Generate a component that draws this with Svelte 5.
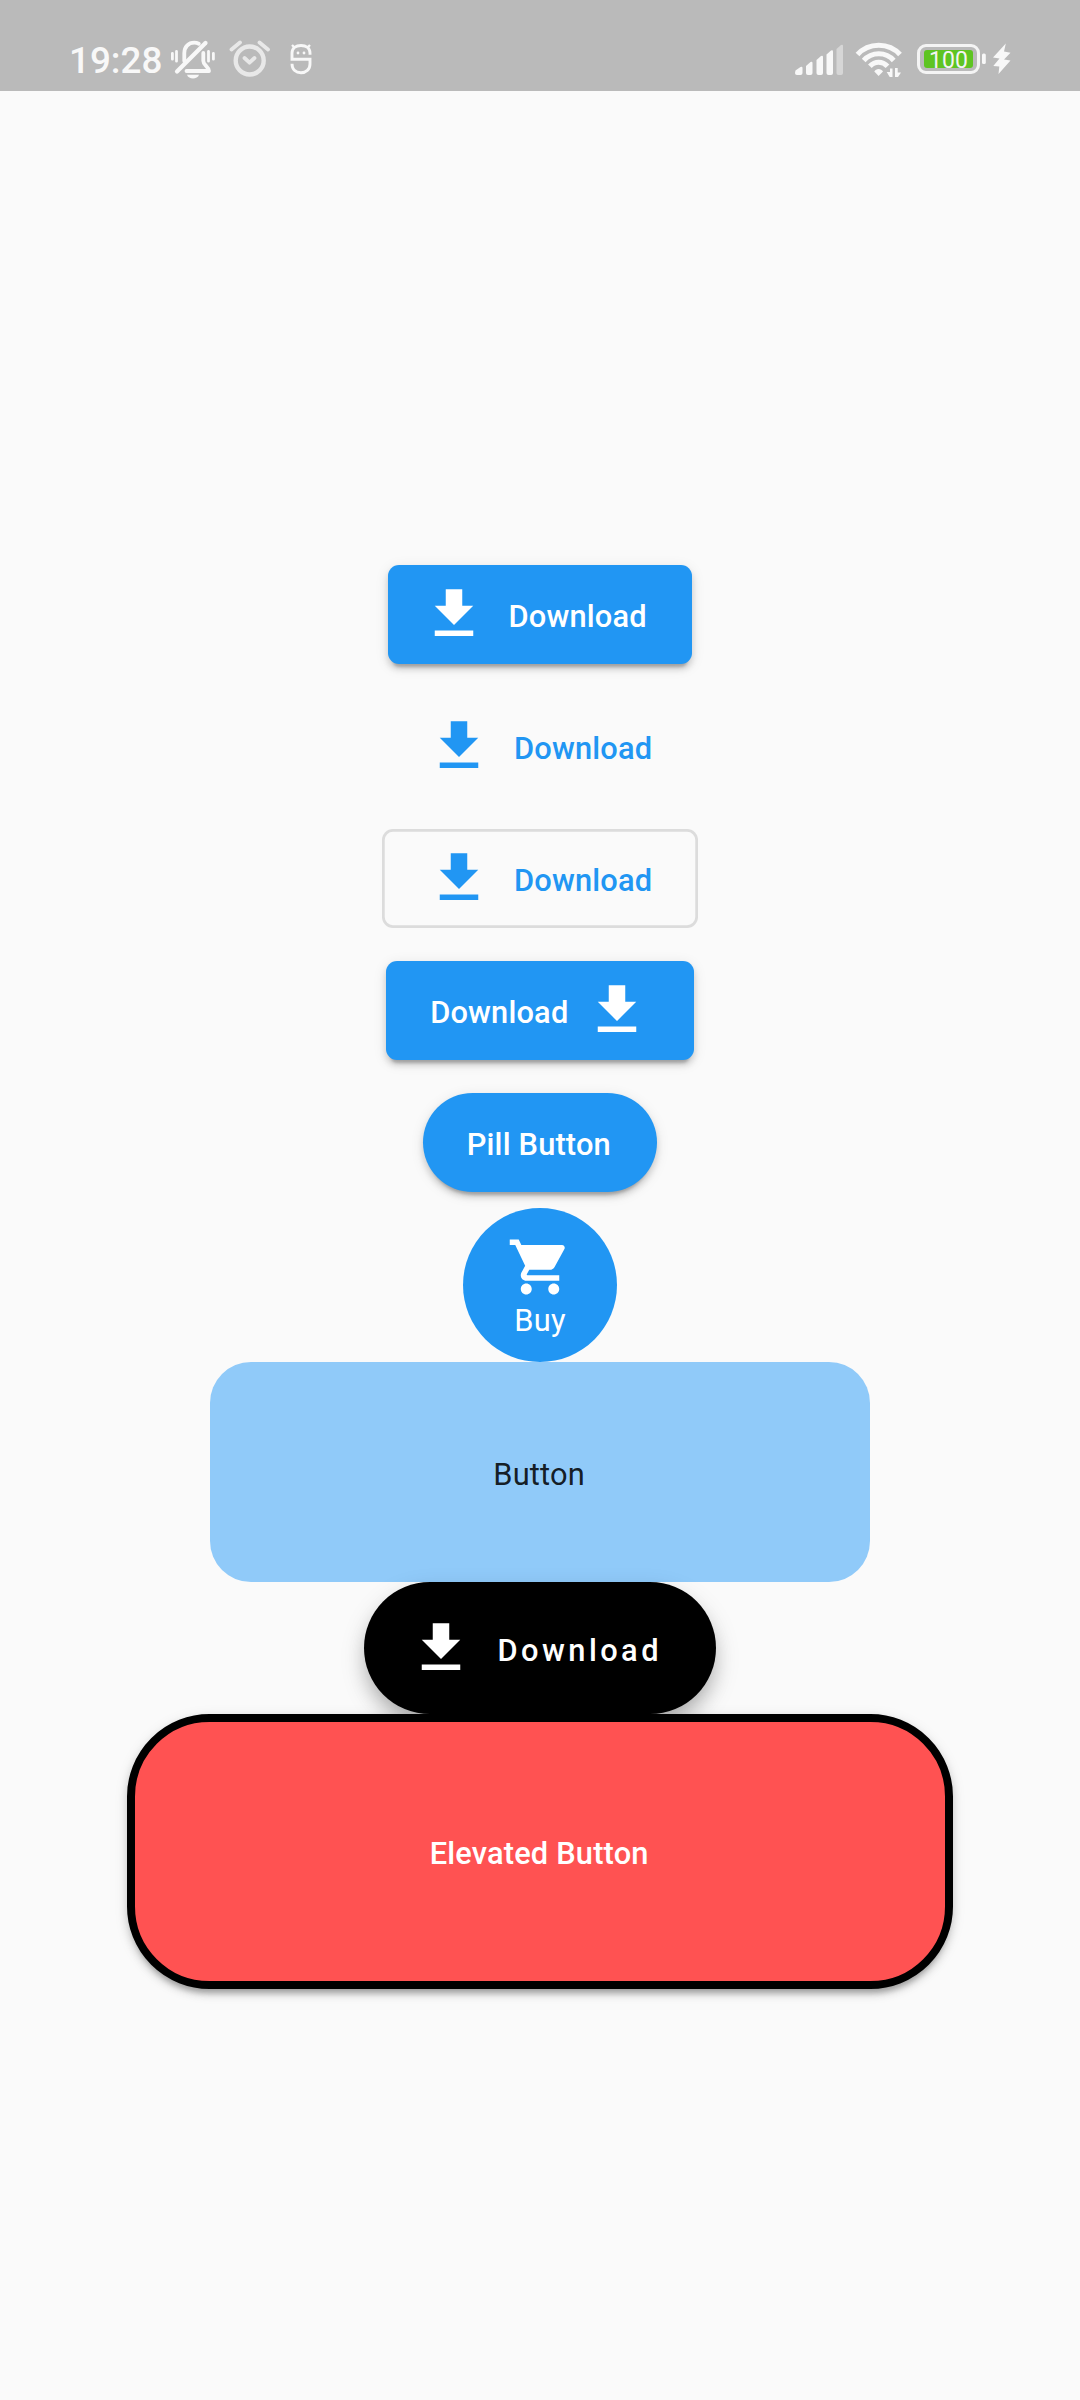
<script>
  const download = 'M19 9h-4V3H9v6H5l7 7 7-7zM5 18v2h14v-2H5z';
  const cart =
    'M7 18c-1.1 0-1.99.9-1.99 2S5.9 22 7 22s2-.9 2-2-.9-2-2-2zM1 2v2h2l3.6 7.59-1.35 2.45c-.16.28-.25.61-.25.96 0 1.1.9 2 2 2h12v-2H7.42c-.14 0-.25-.11-.25-.25l.03-.12.9-1.63h7.45c.75 0 1.41-.41 1.75-1.03l3.58-6.49c.08-.14.12-.31.12-.48 0-.55-.45-1-1-1H5.21l-.94-2H1zm16 16c-1.1 0-1.99.9-1.99 2s.89 2 1.99 2 2-.9 2-2-.9-2-2-2z';
</script>

{#snippet icon(path)}
  <svg class="icon" viewBox="0 0 24 24"><path d={path} fill="currentColor" /></svg>
{/snippet}

<div class="screen">
  <header class="status">
    <span class="time">19:28</span>
    <svg class="bell" width="46" height="91" viewBox="170 0 46 91" fill="none" stroke="#f8f8f8" stroke-linecap="round">
      <path d="M172.400 53.500v5.700M176.500 51.500v9.700M208.500 51.500v9.700M213.400 53.500v5.700" stroke-width="2.800" />
      <path d="M177 71.500L205.500 43" stroke-width="4.200" />
      <path d="M184.300 61V53c0-6 4-10.300 10-10.300 2 0 3 .3 4.500 1M203.300 53v8c0 4 5 5 5.700 10H186.500" stroke-width="3.800" stroke-linejoin="round" />
      <path d="M187 74.700h12c-1.500 5-10.500 5-12 0z" fill="#f8f8f8" stroke="none" />
    </svg>
    <svg class="alarm" width="42" height="91" viewBox="229 0 42 91" fill="none" stroke="#e8e8e8" stroke-linecap="round">
      <circle cx="249.700" cy="60.500" r="14" stroke-width="4.400" />
      <path d="M244.500 58l5 4.700 5-4.700M231.500 49.500l8.500-7M268 49.500l-8.500-7" stroke-width="3.800" stroke-linejoin="round" />
    </svg>
    <svg class="app" width="24" height="91" viewBox="290 0 24 91" fill="none" stroke="#f8f8f8" stroke-width="2.900">
      <path d="M310 54.800V53c0-5-4-7.500-9-7.500s-9 2.500-9 7.500v6.300h18V64c0 5.500-4 8.700-9 8.700s-9-3-9-9" />
      <path d="M292 45l3 3M310 45l-3 3" stroke-width="2.400" />
      <circle cx="298" cy="53" r="1.400" fill="#f8f8f8" stroke="none" />
      <circle cx="304" cy="53" r="1.400" fill="#f8f8f8" stroke="none" />
    </svg>
    <svg class="signal" width="50" height="91" viewBox="794 0 50 91" fill="#f8f8f8">
      <path d="M795.500 70.500l5-3.500q2-1 2 1v5q0 2-2 2h-3.500q-2 0-2-2z" />
      <path d="M806 66l4.500-4q2-1 2 1v10q0 2-2 2H808q-2 0-2-2z" />
      <path d="M816.500 60l4.500-4q2-1 2 1v16q0 2-2 2h-2.500q-2 0-2-2z" />
      <path d="M826.500 54.500l4.500-4q2-1 2 1V73q0 2-2 2h-2.500q-2 0-2-2z" />
      <path d="M836.500 49l4.500-4q2-1 2 1V73q0 2-2 2h-2.500q-2 0-2-2z" fill="#d6d6d6" />
    </svg>
    <svg class="wifi" width="48" height="91" viewBox="855 0 48 91" fill="none" stroke="#f8f8f8" stroke-width="5">
      <path d="M857.500 54.500c11-12.500 31.500-12.500 42.500 0M863.700 60.500c8-9 22.300-9 30 0M869.900 66.300c5-5.500 12.500-5.500 17.600 0" />
      <path d="M874.300 71.500c1.500-3.500 7-3.500 8.700 0l-4.400 4.500z" fill="#f8f8f8" stroke="none" />
      <path d="M890 68.500h2.500V77h-2.800l-3-5h3.300zM895 68h2.700v4.500h3.300L898 77h-3z" fill="#f8f8f8" stroke="none" />
    </svg>
    <div class="battery"><span class="level">100</span></div>
    <svg class="bolt" width="24" height="91" viewBox="985 0 24 91" fill="#f8f8f8">
      <rect x="982" y="53.500" width="3.800" height="10.500" rx="1.500" />
      <path d="M1005.800 43.500L993 57.500l6.500 1-6.200 7.500 6 .5-.8 7.500 12-13.500-6.500-1 6.500-6.800-6.500-1.200z" />
    </svg>
  </header>

  <main>
    <div class="slot"><button class="btn raised lead">{@render icon(download)}<span class="label">Download</span></button></div>
    <div class="slot"><button class="btn flat">{@render icon(download)}<span class="label">Download</span></button></div>
    <div class="slot"><button class="btn flat outlined">{@render icon(download)}<span class="label">Download</span></button></div>
    <div class="slot"><button class="btn raised trail"><span class="label">Download</span>{@render icon(download)}</button></div>
    <div class="slot"><button class="btn raised pill"><span class="label">Pill Button</span></button></div>
    <button class="buy">{@render icon(cart)}<span class="label">Buy</span></button>
    <button class="panel"><span class="label">Button</span></button>
    <button class="dark">{@render icon(download)}<span class="label">Download</span></button>
    <button class="elevated"><span class="label">Elevated Button</span></button>
  </main>
</div>

<style>
  :global(body) { margin: 0; background: #fafafa; }
  .screen {
    width: 1080px;
    height: 2400px;
    overflow: hidden;
    background: #fafafa;
    font-family: Roboto, sans-serif;
    display: flex;
    flex-direction: column;
  }
  .status {
    height: 91px;
    flex: none;
    background: #bababa;
    color: #f8f8f8;
    display: flex;
    align-items: center;
  }
  .status svg { flex: none; }
  .time {
    box-sizing: border-box;
    width: 101px;
    height: 91px;
    margin-left: 69px;
    padding-top: 42px;
    font-size: 36.8px;
    font-weight: 500;
    line-height: 37px;
    white-space: nowrap;
  }
  .alarm { margin-left: 13px; }
  .app { margin-left: 19px; }
  .signal { margin-left: auto; }
  .wifi { margin-left: 11px; }
  .battery {
    box-sizing: border-box;
    width: 63px;
    height: 30px;
    margin: 27px 0 0 14px;
    padding: 3px 4px;
    border: 3px solid #f4f4f4;
    border-radius: 9px;
    display: flex;
  }
  .level {
    width: 49px;
    height: 18px;
    border-radius: 3px;
    background: #5ec422;
    color: #f4f4f4;
    font-size: 23px;
    line-height: 21px;
    text-align: center;
  }
  .bolt { margin: 0 71px 0 5px; overflow: visible; }

  main {
    margin-top: 457.25px;
    display: flex;
    flex-direction: column;
    align-items: center;
  }
  button {
    box-sizing: border-box;
    flex: none;
    margin: 0;
    padding: 0;
    border: 0;
    background: none;
    font-family: inherit;
    display: flex;
    align-items: center;
    justify-content: center;
  }
  .slot { height: 132px; display: flex; align-items: center; }
  .icon { width: 66px; height: 66px; flex: none; display: block; }
  .label {
    font-size: 30.8px;
    font-weight: 500;
    line-height: 36px;
    letter-spacing: 0.18px;
    white-space: nowrap;
    padding: 5px 1.7px 0 0;
  }
  .btn { height: 99px; gap: 22px; padding: 0 44px; border-radius: 11px; color: #fff; }
  .raised {
    background: #2196f3;
    box-shadow: 0 8px 3px -5px rgba(0, 0, 0, 0.2), 0 5px 6px rgba(0, 0, 0, 0.14), 0 3px 14px rgba(0, 0, 0, 0.1);
  }
  .lead { padding-left: 33px; }
  .flat { color: #2196f3; }
  .outlined { box-shadow: inset 0 0 0 2.75px #dcdcdc; }
  .trail { gap: 13.75px; }
  .pill { border-radius: 49.5px; }
  .pill .label { padding-right: 2.3px; }
  .buy {
    width: 154px;
    height: 154px;
    border-radius: 50%;
    background: #2196f3;
    color: #fff;
    flex-direction: column;
  }
  .buy .label { font-weight: 400; padding: 3px 0 0; margin-bottom: -3px; }
  .panel {
    width: 660px;
    height: 220px;
    border-radius: 41px;
    background: #90caf9;
    color: rgba(0, 0, 0, 0.87);
  }
  .panel .label { font-weight: 400; }
  .dark {
    width: 352px;
    height: 132px;
    border-radius: 66px;
    background: #000;
    color: #fff;
    gap: 23.5px;
    justify-content: flex-start;
    padding-left: 44px;
    box-shadow: 0 12px 20px -4px rgba(0, 0, 0, 0.24), 0 10px 28px -2px rgba(0, 0, 0, 0.16);
  }
  .dark .label { letter-spacing: 3.45px; }
  .elevated {
    position: relative;
    width: 826px;
    height: 275px;
    border: 8px solid #000;
    border-radius: 82.5px;
    background: #ff5252;
    color: #fff;
    box-shadow: 0 8px 5px -4px rgba(0, 0, 0, 0.2), 0 5px 8px rgba(0, 0, 0, 0.14), 0 3px 14px rgba(0, 0, 0, 0.1);
  }
</style>
